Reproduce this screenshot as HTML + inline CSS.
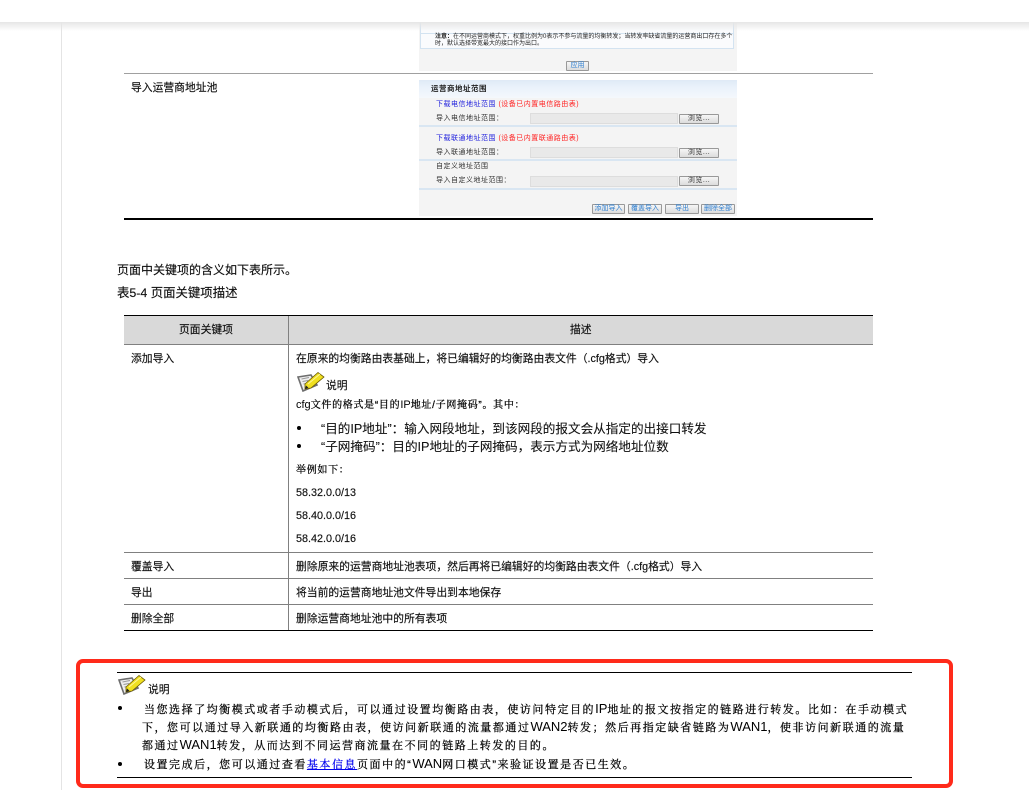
<!DOCTYPE html>
<html lang="zh-CN"><head><meta charset="utf-8"><title>页面关键项描述</title>
<style>
html,body{margin:0;padding:0;background:#fff;width:1029px;height:790px;overflow:hidden}
body{position:relative;color:#111;font-family:"Liberation Sans","Noto Sans CJK SC",sans-serif}
.a{position:absolute;white-space:nowrap;line-height:16px;height:16px}
.b{position:absolute}
.t11{font-size:10.8px;-webkit-text-stroke:.15px #111}
.t12{font-size:12px;-webkit-text-stroke:.15px #111}
.t13{font-size:12.6px;-webkit-text-stroke:.1px #111}
.s{font-family:"Liberation Sans","Noto Serif CJK SC",serif;font-size:10px;letter-spacing:.7px;color:#000;-webkit-text-stroke:.25px #000}
.s i{font-style:normal;font-size:11px;letter-spacing:0;-webkit-text-stroke:0}
.n{font-family:"Liberation Sans","Noto Serif CJK SC",serif;font-size:11px;letter-spacing:1.53px;color:#000;-webkit-text-stroke:.25px #000}
.n i{font-style:normal;font-size:13px;letter-spacing:0;-webkit-text-stroke:0}
.img{position:absolute;filter:blur(.3px);color:#333;font-size:7px}
.img .a{line-height:10px;height:10px;letter-spacing:.5px}
.btn{position:absolute;box-sizing:border-box;background:linear-gradient(#f6f6f6,#dcdcdc);border:1px solid #999;border-radius:1px;color:#2f7fd0;font-size:7px;line-height:8px;text-align:center;white-space:nowrap}
.brs{color:#333;letter-spacing:.5px}
.in{position:absolute;background:#e9e9e9;border:1px solid #ddd;box-sizing:border-box;height:11px;left:530px;width:148px}
.ln{position:absolute;left:419px;width:318px;height:2px;background:#d9e6f2}
.dot{position:absolute;width:4px;height:4px;border-radius:50%;background:#000}
a{color:#00e;-webkit-text-stroke:.2px #00e}
</style></head><body>
<div class="b" style="left:61px;top:0;width:1px;height:790px;background:#e4e4e4"></div>

<div class="img" style="left:0;top:0;width:1029px;height:220px">
<div class="b" style="left:419px;top:22px;width:318px;height:49px;background:#f4f4f4"></div>
<div class="b" style="left:420px;top:22px;width:314px;height:27px;box-sizing:border-box;background:#fafbfd;border:1px solid #d3e3f1;border-top:0"></div>
<div class="b" style="left:421px;top:33px;width:312px;height:1px;background:#d3e3f1"></div>
<div class="a" style="left:435px;top:32px;font-size:6px;letter-spacing:0;color:#222"><b>注意：</b>在不同运营商模式下，权重比例为0表示不参与流量的均衡转发；当转发率缺省流量的运营商出口存在多个</div>
<div class="a" style="left:435px;top:39px;font-size:6px;letter-spacing:0;color:#222">时，默认选择带宽最大的接口作为出口。</div>
<div class="btn" style="left:566px;top:61px;width:23px;height:10px">应用</div>

<div class="b" style="left:419px;top:80px;width:318px;height:136px;background:#f4f4f4"></div>
<div class="b" style="left:419px;top:80px;width:318px;height:18px;background:linear-gradient(#dfeaf6,#eaf2fb 40%,#f5f8fc)"></div>
<div class="a" style="left:431px;top:84px;font-weight:bold;font-size:7.5px;color:#222">运营商地址范围</div>
<div class="a" style="left:436px;top:100px;color:#22d">下载电信地址范围 <span style="color:#f22">(设备已内置电信路由表)</span></div>
<div class="a brs" style="left:436px;top:114px">导入电信地址范围：</div>
<div class="in" style="top:113px"></div><div class="btn brs" style="left:679px;top:114px;width:40px;height:10px">浏览...</div>
<div class="ln" style="top:125px"></div>
<div class="a" style="left:436px;top:134px;color:#22d">下载联通地址范围 <span style="color:#f22">(设备已内置联通路由表)</span></div>
<div class="a brs" style="left:436px;top:148px">导入联通地址范围：</div>
<div class="in" style="top:147px"></div><div class="btn brs" style="left:679px;top:148px;width:40px;height:10px">浏览...</div>
<div class="ln" style="top:159px"></div>
<div class="a brs" style="left:436px;top:162px">自定义地址范围</div>
<div class="a brs" style="left:436px;top:176px">导入自定义地址范围：</div>
<div class="in" style="top:176px"></div><div class="btn brs" style="left:679px;top:176px;width:40px;height:10px">浏览...</div>
<div class="ln" style="top:188px"></div>
<div class="btn" style="left:592px;top:204px;width:33px;height:10px">添加导入</div>
<div class="btn" style="left:628px;top:204px;width:34px;height:10px">覆盖导入</div>
<div class="btn" style="left:665px;top:204px;width:34px;height:10px">导出</div>
<div class="btn" style="left:701px;top:204px;width:34px;height:10px">删除全部</div>
</div>

<div class="b" style="left:0;top:0;width:1029px;height:22px;background:#fff"></div>
<div class="b" style="left:0;top:22px;width:1029px;height:9px;background:linear-gradient(#e6e6e6,rgba(255,255,255,0))"></div>

<div class="b" style="left:124px;top:73px;width:749px;height:1px;background:#a0a0a0"></div>
<div class="a t11" style="left:131px;top:80px">导入运营商地址池</div>
<div class="b" style="left:124px;top:218px;width:749px;height:2px;background:#000"></div>

<div class="a t12" style="left:117px;top:262px">页面中关键项的含义如下表所示。</div>
<div class="a t12" style="left:117px;top:285px;font-size:12.4px">表5-4 页面关键项描述</div>

<div class="b" style="left:124px;top:316px;width:749px;height:28px;background:#d9d9d9"></div>
<div class="b" style="left:124px;top:315px;width:749px;height:1px;background:#000"></div>
<div class="b" style="left:124px;top:344px;width:749px;height:1px;background:#808080"></div>
<div class="b" style="left:288px;top:316px;width:1px;height:314px;background:#808080"></div>
<div class="b" style="left:124px;top:552px;width:749px;height:1px;background:#808080"></div>
<div class="b" style="left:124px;top:578px;width:749px;height:1px;background:#808080"></div>
<div class="b" style="left:124px;top:604px;width:749px;height:1px;background:#808080"></div>
<div class="b" style="left:124px;top:630px;width:749px;height:1px;background:#000"></div>

<div class="a t11" style="left:179px;top:322px">页面关键项</div>
<div class="a t11" style="left:570px;top:322px">描述</div>
<div class="a t11" style="left:131px;top:351px">添加导入</div>
<div class="a t11" style="left:296px;top:351px">在原来的均衡路由表基础上，将已编辑好的均衡路由表文件（.cfg格式）导入</div>

<svg class="b" style="left:297px;top:371px" width="28" height="21" viewBox="0 0 28 21">
<path d="M1 6 L14 4 L20 14 L6 20 Z" fill="#eee" stroke="#6e6e6e" stroke-width="1.6"/>
<path d="M4.5 8 L12 6.5 M5.5 10.5 L11 9.5 M6.5 13 L9.5 12.5" stroke="#999" stroke-width="1"/>
<path d="M8 13 L21 1.5 L27 6 L14 17 L8 18 Z" fill="#f0e020" stroke="#6b5a00" stroke-width=".8"/>
<path d="M11 13 L23 3" stroke="#fff59a" stroke-width="1"/>
<path d="M8 18 L9 14.5 L11.5 16.8 Z" fill="#222"/>
</svg>
<div class="a t11" style="left:326px;top:378px">说明</div>
<div class="a s" style="left:296px;top:397px"><i>cfg</i>文件的格式是“目的<i>IP</i>地址/子网掩码”。其中：</div>
<div class="dot" style="left:297px;top:426px"></div>
<div class="dot" style="left:297px;top:444px"></div>
<div class="a t13" style="left:321px;top:421px">“目的IP地址”：输入网段地址，到该网段的报文会从指定的出接口转发</div>
<div class="a t13" style="left:321px;top:439px">“子网掩码”：目的IP地址的子网掩码，表示方式为网络地址位数</div>
<div class="a s" style="left:296px;top:463px">举例如下：</div>
<div class="a t11" style="left:296px;top:485px">58.32.0.0/13</div>
<div class="a t11" style="left:296px;top:508px">58.40.0.0/16</div>
<div class="a t11" style="left:296px;top:531px">58.42.0.0/16</div>

<div class="a t11" style="left:131px;top:559px">覆盖导入</div>
<div class="a t11" style="left:296px;top:559px">删除原来的运营商地址池表项，然后再将已编辑好的均衡路由表文件（.cfg格式）导入</div>
<div class="a t11" style="left:131px;top:585px">导出</div>
<div class="a t11" style="left:296px;top:585px">将当前的运营商地址池文件导出到本地保存</div>
<div class="a t11" style="left:131px;top:611px">删除全部</div>
<div class="a t11" style="left:296px;top:611px">删除运营商地址池中的所有表项</div>

<div class="b" style="left:76px;top:659px;width:877px;height:129px;box-sizing:border-box;border:4px solid #ff2a1a;border-radius:7px"></div>
<div class="b" style="left:117px;top:672px;width:795px;height:1px;background:#000"></div>
<div class="b" style="left:117px;top:777px;width:795px;height:1px;background:#000"></div>
<svg class="b" style="left:118px;top:674px" width="28" height="21" viewBox="0 0 28 21">
<path d="M1 6 L14 4 L20 14 L6 20 Z" fill="#eee" stroke="#6e6e6e" stroke-width="1.6"/>
<path d="M4.5 8 L12 6.5 M5.5 10.5 L11 9.5 M6.5 13 L9.5 12.5" stroke="#999" stroke-width="1"/>
<path d="M8 13 L21 1.5 L27 6 L14 17 L8 18 Z" fill="#f0e020" stroke="#6b5a00" stroke-width=".8"/>
<path d="M11 13 L23 3" stroke="#fff59a" stroke-width="1"/>
<path d="M8 18 L9 14.5 L11.5 16.8 Z" fill="#222"/>
</svg>
<div class="a t11" style="left:148px;top:682px">说明</div>
<div class="dot" style="left:118px;top:706px"></div>
<div class="dot" style="left:118px;top:762px"></div>
<div class="a n" style="left:144px;top:701px">当您选择了均衡模式或者手动模式后，可以通过设置均衡路由表，使访问特定目的<i>IP</i>地址的报文按指定的链路进行转发。比如：在手动模式</div>
<div class="a n" style="left:142px;top:719px">下，您可以通过导入新联通的均衡路由表，使访问新联通的流量都通过<i>WAN2</i>转发；然后再指定缺省链路为<i>WAN1</i>，使非访问新联通的流量</div>
<div class="a n" style="left:142px;top:737px">都通过<i>WAN1</i>转发，从而达到不同运营商流量在不同的链路上转发的目的。</div>
<div class="a n" style="left:144px;top:756px">设置完成后，您可以通过查看<a href="#">基本信息</a>页面中的“<i>WAN</i>网口模式”来验证设置是否已生效。</div>
</body></html>
